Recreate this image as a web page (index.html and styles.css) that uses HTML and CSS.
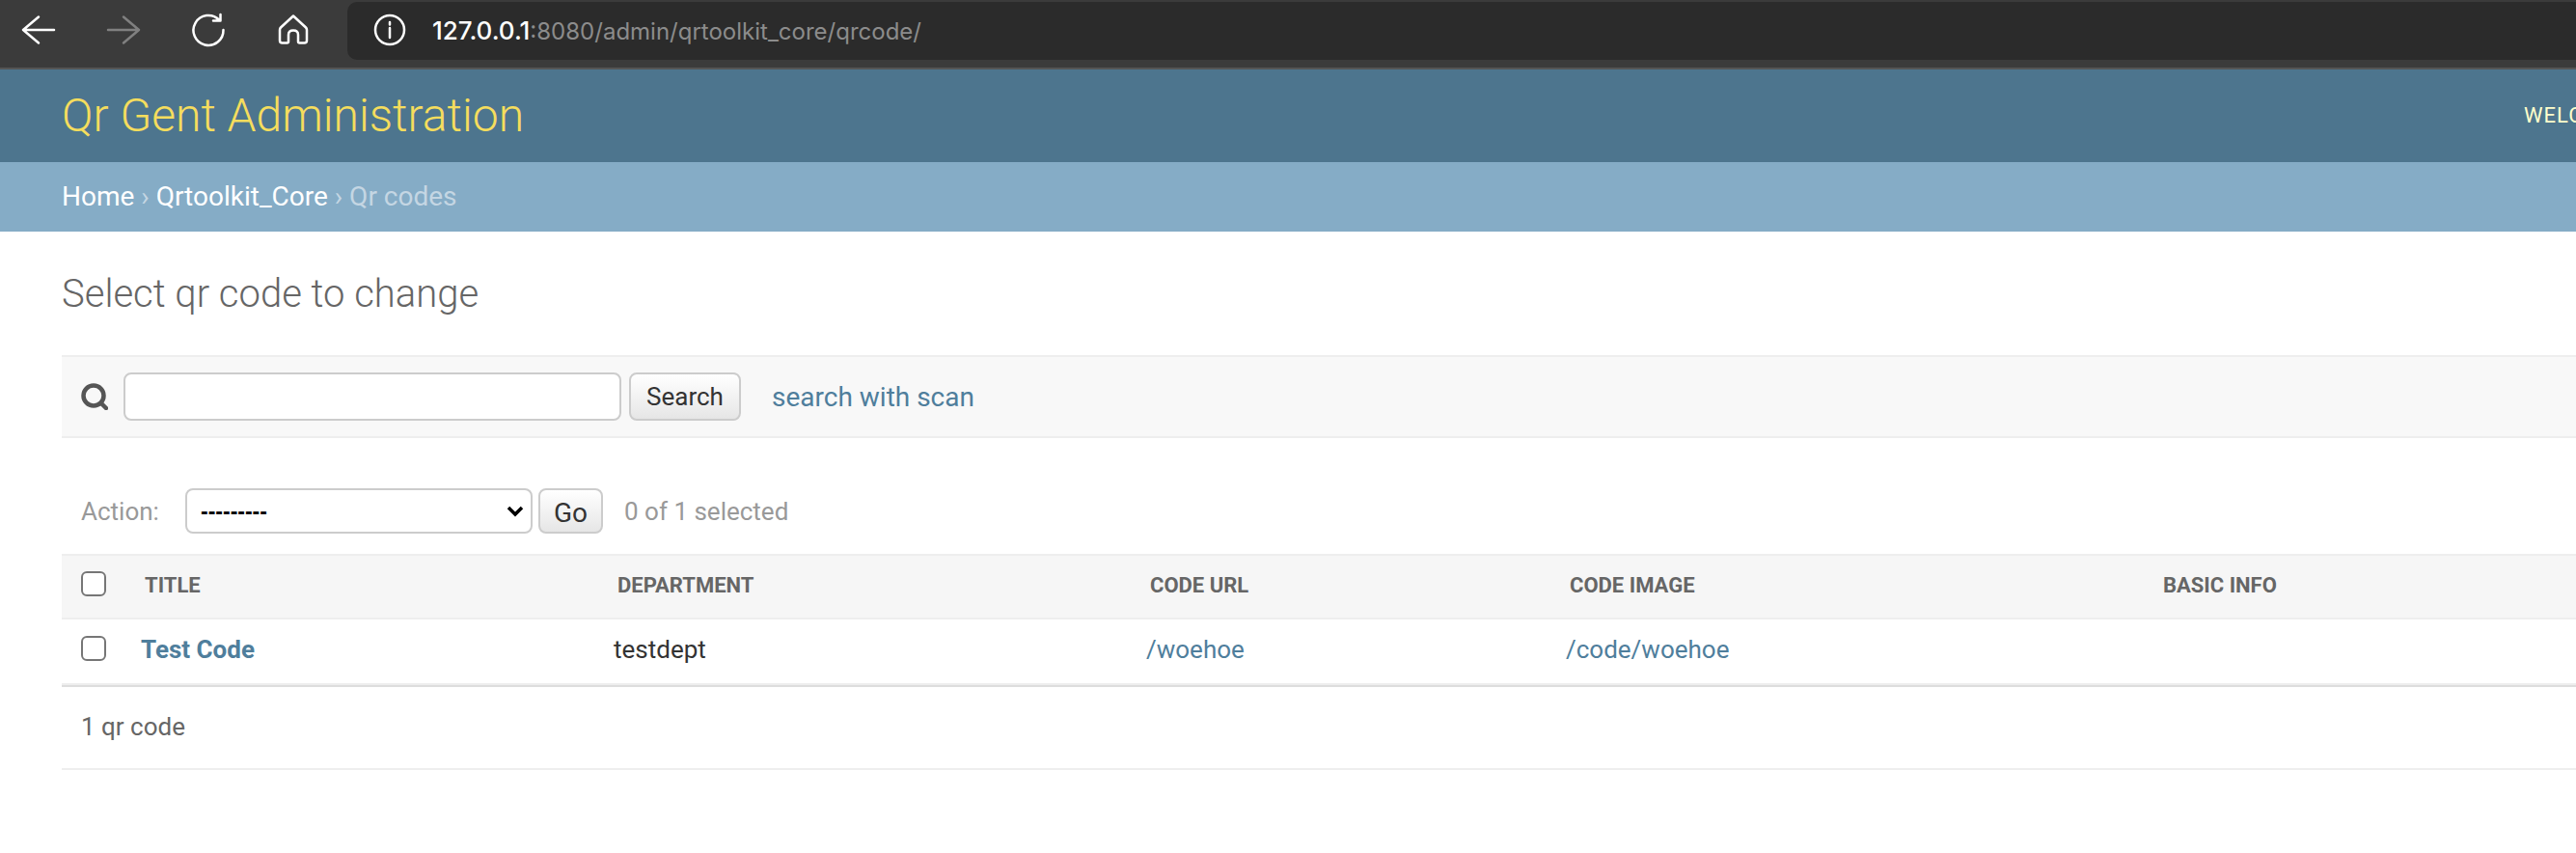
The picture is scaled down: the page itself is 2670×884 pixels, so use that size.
FILE: index.html
```html
<!DOCTYPE html>
<html lang="en">
<head>
  <meta charset="UTF-8" />
  <title>Select qr code to change | Qr Gent Administration</title>
  <link rel="stylesheet" href="styles.css">
</head>
<body>
  <!-- browser toolbar -->
  <div class="browser-bar">
    <svg class="nav-icon" viewBox="0 0 48 48"><path d="M8 24H40M24 10.500L8 24L24 37.500"/></svg>
    <svg class="nav-icon nav-icon-off" viewBox="0 0 48 48"><path d="M8 24H40M24 10.500L40 24L24 37.500"/></svg>
    <svg class="nav-icon" viewBox="0 0 48 48"><path d="M35 13.500A15.500 15.500 0 1 0 39.500 24M36.500 8V14.500H29"/></svg>
    <svg class="nav-icon" viewBox="0 0 48 48"><path d="M24 9.500L11 21.500Q10 22.500 10 24V35Q10 37.500 12.500 37.500H17.500Q19 37.500 19 36V29Q19 24.500 24 24.500Q29 24.500 29 29V36Q29 37.500 30.500 37.500H35.500Q38 37.500 38 35V24Q38 22.500 37 21.500Z"/></svg>
    <div class="url-bar">
      <svg class="info-icon" viewBox="0 0 36 36"><circle cx="18" cy="18" r="15"/><path d="M18 16V26M18 10V12.500"/></svg>
      <span class="url-text"><span class="url-host">127.0.0.1</span>:8080/admin/qrtoolkit_core/qrcode/</span>
    </div>
  </div>

  <div class="site-header">
    <h1 class="site-name">Qr Gent Administration</h1>
    <div class="user-tools">Welcome, admin. View site / Change password / Log out</div>
  </div>

  <div class="breadcrumbs">
    <a href="#">Home</a> › <a href="#">Qrtoolkit_Core</a> › Qr codes
  </div>

  <div class="content">
    <h2 class="page-title">Select qr code to change</h2>

    <div class="toolbar">
      <svg class="search-icon" viewBox="0 0 28 28"><circle cx="13" cy="13" r="10.500"/><path d="M21 21L26 26"/></svg>
      <input class="search-input" type="text">
      <button class="btn search-btn">Search</button>
      <a class="scan-link" href="#">search with scan</a>
    </div>

    <div class="actions">
      <label class="action-label">Action:</label>
      <div class="select-wrap">
        <select class="action-select"><option>---------</option></select>
        <svg class="select-arrow" viewBox="0 0 18 12"><path d="M2 2L9 9L16 2"/></svg>
      </div>
      <button class="btn go-btn">Go</button>
      <span class="action-counter">0 of 1 selected</span>
    </div>

    <table class="results">
      <colgroup>
        <col class="col-check">
        <col class="col-title">
        <col class="col-dept">
        <col class="col-url">
        <col class="col-image">
        <col class="col-info">
      </colgroup>
      <thead>
        <tr>
          <th class="check-cell"><input class="check" type="checkbox"></th>
          <th>Title</th>
          <th>Department</th>
          <th>Code url</th>
          <th>Code image</th>
          <th>Basic info</th>
        </tr>
      </thead>
      <tbody>
        <tr>
          <td class="check-cell"><input class="check" type="checkbox"></td>
          <td><a class="row-title" href="#">Test Code</a></td>
          <td>testdept</td>
          <td><a href="#">/woehoe</a></td>
          <td><a href="#">/code/woehoe</a></td>
          <td></td>
        </tr>
      </tbody>
    </table>

    <p class="paginator">1 qr code</p>
  </div>
</body>
</html>
```

FILE: styles.css
```css
* {
  box-sizing: border-box;
}
html, body {
  overflow: hidden;
}
body {
  margin: 0;
  font-family: Roboto, "Liberation Sans", sans-serif;
  font-size: 26px;
  color: #333;
  background: #fff;
}
a {
  color: #4f7e9c;
  text-decoration: none;
}

/* browser toolbar */
.browser-bar {
  display: flex;
  align-items: flex-start;
  gap: 40px;
  height: 72px;
  padding: 7px 0 0 16px;
  background: #3b3b3b;
  border-bottom: 2px solid #555;
}
.nav-icon {
  width: 48px;
  height: 48px;
  flex: none;
  fill: none;
  stroke: #fff;
  stroke-width: 2.5;
  stroke-linecap: round;
  stroke-linejoin: round;
}
.nav-icon-off {
  stroke: #808080;
}
.url-bar {
  display: flex;
  align-items: center;
  flex: 1;
  height: 60px;
  margin: -5px 0 0 -8px;
  padding: 0 0 2px 26px;
  background: #2b2b2b;
  border-radius: 10px 0 0 10px;
}
.info-icon {
  width: 36px;
  height: 36px;
  fill: none;
  stroke: #fff;
  stroke-width: 2.500;
  stroke-linecap: round;
}
.url-text {
  margin-left: 26px;
  font-family: Inter, sans-serif;
  font-size: 24px;
  color: #8c8c8c;
}
.url-host {
  font-size: 26px;
  font-weight: 500;
  color: #fff;
}

/* admin header */
.site-header {
  display: flex;
  align-items: center;
  height: 96px;
  padding: 0 0 2px 64px;
  background: #4d758e;
}
.site-name {
  flex: 1;
  margin: 0;
  font-size: 48px;
  font-weight: 300;
  color: #f5dd5d;
}
.user-tools {
  width: 54px;
  font-size: 22px;
  letter-spacing: 1px;
  text-transform: uppercase;
  white-space: nowrap;
  color: #ffc;
}
.breadcrumbs {
  height: 72px;
  padding-left: 64px;
  font-size: 28px;
  line-height: 72px;
  background: #85acc6;
  color: #c4d6e3;
}
.breadcrumbs a {
  color: #fff;
}

.content {
  padding-left: 64px;
}
.page-title {
  margin: 0;
  padding-top: 41px;
  height: 128px;
  font-size: 40px;
  font-weight: 300;
  line-height: 48px;
  color: #666;
}

/* search */
.toolbar {
  display: flex;
  align-items: center;
  height: 86px;
  padding-left: 20px;
  background: #f8f8f8;
  border-top: 2px solid #eee;
  border-bottom: 2px solid #eee;
}
.search-icon {
  width: 28px;
  height: 28px;
  margin-right: 16px;
  fill: none;
  stroke: #555;
  stroke-width: 4.500;
  stroke-linecap: round;
}
.search-input {
  width: 516px;
  height: 50px;
  background: #fff;
  border: 2px solid #ccc;
  border-radius: 8px;
}
.btn {
  font-family: Roboto, sans-serif;
  font-size: 26px;
  color: #333;
  background: linear-gradient(#fff, #e6e6e6);
  border: 2px solid #ccc;
  border-radius: 8px;
  padding: 0;
}
.search-btn {
  width: 116px;
  height: 50px;
  margin-left: 8px;
}
.scan-link {
  margin-left: 32px;
  font-size: 28px;
}

/* actions */
.actions {
  display: flex;
  align-items: center;
  height: 120px;
  padding: 31px 0 0 20px;
}
.action-label {
  width: 108px;
  color: #999;
}
.select-wrap {
  position: relative;
  width: 360px;
  height: 47px;
}
.action-select {
  width: 100%;
  height: 100%;
  padding-left: 14px;
  font-family: "Liberation Sans", sans-serif;
  font-size: 23px;
  font-weight: 700;
  color: #000;
  background: #fff;
  border: 2px solid #ccc;
  border-radius: 8px;
  appearance: none;
}
.select-arrow {
  position: absolute;
  top: 18px;
  right: 9px;
  width: 18px;
  height: 12px;
  fill: none;
  stroke: #000;
  stroke-width: 3.500;
}
.go-btn {
  width: 67px;
  height: 47px;
  margin-left: 6px;
  padding-top: 4px;
  font-size: 28px;
}
.action-counter {
  margin-left: 22px;
  color: #999;
}

/* results table */
.results {
  width: 2606px;
  table-layout: fixed;
  border-collapse: separate;
  border-spacing: 0;
}
.col-check { width: 62px; }
.col-title { width: 490px; }
.col-dept { width: 552px; }
.col-url { width: 435px; }
.col-image { width: 615px; }
.col-info { width: 452px; }
.results th {
  height: 68px;
  padding: 0 24px 4px;
  font-size: 22px;
  font-weight: 700;
  text-align: left;
  text-transform: uppercase;
  color: #666;
  background: #f6f6f6;
  border-top: 2px solid #eee;
  border-bottom: 2px solid #eee;
}
.results td {
  height: 70px;
  padding: 0 20px 7px;
  border-bottom: 2px solid #ddd;
  box-shadow: inset 0 -2px 0 #eee;
}
.results .check-cell {
  padding-left: 20px;
  padding-right: 0;
  padding-bottom: 8px;
}
.results th.check-cell {
  padding-bottom: 6px;
}
.check {
  display: block;
  width: 26px;
  height: 26px;
  margin: 0;
  background: #fff;
  border: 2.500px solid #767676;
  border-radius: 6px;
  appearance: none;
}
.row-title {
  font-weight: 700;
}

.paginator {
  height: 86px;
  margin: 0;
  padding-left: 20px;
  line-height: 82px;
  color: #666;
  border-bottom: 2px solid #eee;
}
```
